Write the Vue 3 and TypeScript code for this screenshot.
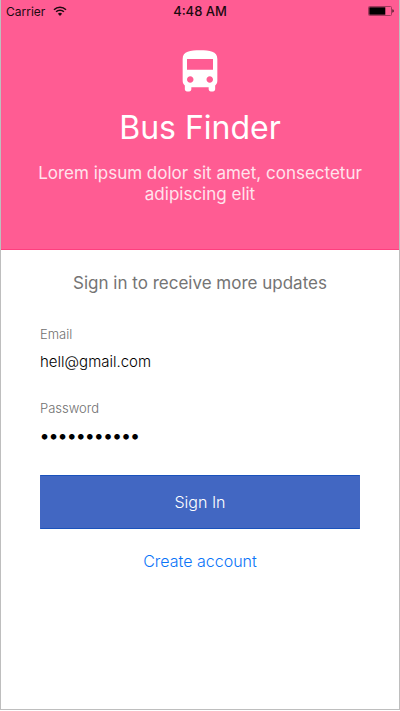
<script setup lang="ts">
import { ref } from 'vue'

const email = ref<string>('hell@gmail.com')
const password = ref<string>('hellomobile')
</script>

<template>
  <div class="screen">
    <header class="hero">
      <div class="status">
        <span class="carrier">
          Carrier
          <svg class="wifi" viewBox="0 0 14 10" aria-hidden="true">
            <path d="M1 3.7a8.6 8.6 0 0 1 12 0" />
            <path d="M3.1 5.8a5.6 5.6 0 0 1 7.8 0" />
            <path class="wifi-dot" d="M7 10L4.9 7.8a3 3 0 0 1 4.2 0z" />
          </svg>
        </span>
        <time class="clock">4:48 AM</time>
        <svg class="battery" viewBox="0 0 26 10" aria-hidden="true">
          <rect class="battery-case" x="0.5" y="0.5" width="23" height="9" rx="1" />
          <rect x="1.3" y="1.3" width="16" height="7.4" />
          <path d="M24.5 3.3c1.5.3 1.5 3.1 0 3.4z" />
        </svg>
      </div>
      <svg class="bus" viewBox="0 0 24 24" aria-hidden="true">
        <path
          d="M4 16c0 .88.39 1.67 1 2.22V20c0 .55.45 1 1 1h1c.55 0 1-.45 1-1v-1h8v1c0 .55.45 1 1 1h1c.55 0 1-.45 1-1v-1.78c.61-.55 1-1.34 1-2.22V6c0-3.5-3.58-4-8-4s-8 .5-8 4v10zm3.5 1c-.83 0-1.5-.67-1.5-1.5S6.67 14 7.5 14s1.5.67 1.5 1.5S8.33 17 7.5 17zm9 0c-.83 0-1.5-.67-1.5-1.5s.67-1.5 1.5-1.5 1.5.67 1.5 1.5-.67 1.5-1.5 1.5zm1.5-6H6V6h12v5z"
        />
      </svg>
      <h1 class="title">Bus Finder</h1>
      <p class="tagline">Lorem ipsum dolor sit amet, consectetur adipiscing elit</p>
    </header>

    <main class="content">
      <h2 class="prompt">Sign in to receive more updates</h2>
      <form class="form" @submit.prevent>
        <div class="field">
          <label for="email">Email</label>
          <input id="email" v-model="email" type="email" autocomplete="email" />
        </div>
        <div class="field">
          <label for="password">Password</label>
          <input
            id="password"
            v-model="password"
            class="secret"
            type="password"
            autocomplete="current-password"
          />
        </div>
        <button class="submit" type="submit">Sign In</button>
      </form>
      <a class="create" href="#">Create account</a>
    </main>
  </div>
</template>

<style>
body {
  background: #fff;
}
</style>

<style scoped>
.screen {
  box-sizing: border-box;
  min-height: calc(100vh - 1px);
  border: 1px solid #bebebe;
  border-top: 0;
  background: #fff;
  color: #111;
  font-family: Inter, "Liberation Sans", sans-serif;
}

.hero {
  box-sizing: border-box;
  display: flex;
  flex-direction: column;
  align-items: center;
  min-height: 250px;
  border-bottom: 1px solid #ff3f7f;
  background: #ff5c93;
  color: #fff;
}

.status {
  box-sizing: border-box;
  display: grid;
  grid-template-columns: 1fr auto 1fr;
  align-items: center;
  width: 100%;
  height: 22px;
  padding: 0 5px;
  color: #1c0a10;
  font-size: 12px;
}

.carrier {
  display: flex;
  align-items: center;
  gap: 8px;
}

.wifi {
  width: 14px;
  height: 10px;
  fill: none;
  stroke: currentColor;
  stroke-width: 1.6;
}

.wifi-dot {
  fill: currentColor;
  stroke: none;
}

.clock {
  font-size: 13px;
  font-weight: 500;
}

.battery {
  justify-self: end;
  width: 26px;
  height: 10px;
  fill: #000;
}

.battery-case {
  fill: none;
  stroke: #a03a5c;
}

.bus {
  width: 52px;
  height: 52px;
  margin-top: 24px;
  fill: #fff;
}

.title {
  margin: 8px 0 0;
  font-size: 32px;
  font-weight: 400;
  line-height: 44px;
}

.tagline {
  margin: 13px 32px 0;
  color: #ffe3ec;
  font-size: 17px;
  line-height: 21px;
  text-align: center;
}

.content {
  display: flex;
  flex-direction: column;
  align-items: center;
  padding: 20px 39px;
}

.prompt {
  margin: 0;
  color: #747474;
  font-size: 17px;
  font-weight: 400;
  line-height: 26px;
}

.form {
  display: flex;
  flex-direction: column;
  gap: 28px;
  width: 100%;
  margin-top: 30px;
}

.field {
  display: flex;
  flex-direction: column;
  gap: 8px;
}

.field label {
  color: #707070;
  font-size: 13px;
  font-weight: 300;
  line-height: 16px;
}

.field input {
  box-sizing: border-box;
  width: 100%;
  height: 22px;
  padding: 0;
  border: 0;
  outline: 0;
  background: transparent;
  color: #000;
  font-family: inherit;
  font-size: 15px;
  font-weight: 300;
}

.field .secret {
  font-size: 18px;
  font-weight: 600;
}

.submit {
  height: 54px;
  margin-top: 1px;
  padding: 0;
  border: 1px solid #1a52bc;
  border-right-color: #4267c2;
  border-left-color: #4267c2;
  background: #4267c2;
  color: #fff;
  font-family: inherit;
  font-size: 16px;
  font-weight: 300;
}

.create {
  margin-top: 20px;
  color: #0a74f8;
  font-size: 16px;
  font-weight: 300;
  line-height: 24px;
  text-decoration: none;
}
</style>
